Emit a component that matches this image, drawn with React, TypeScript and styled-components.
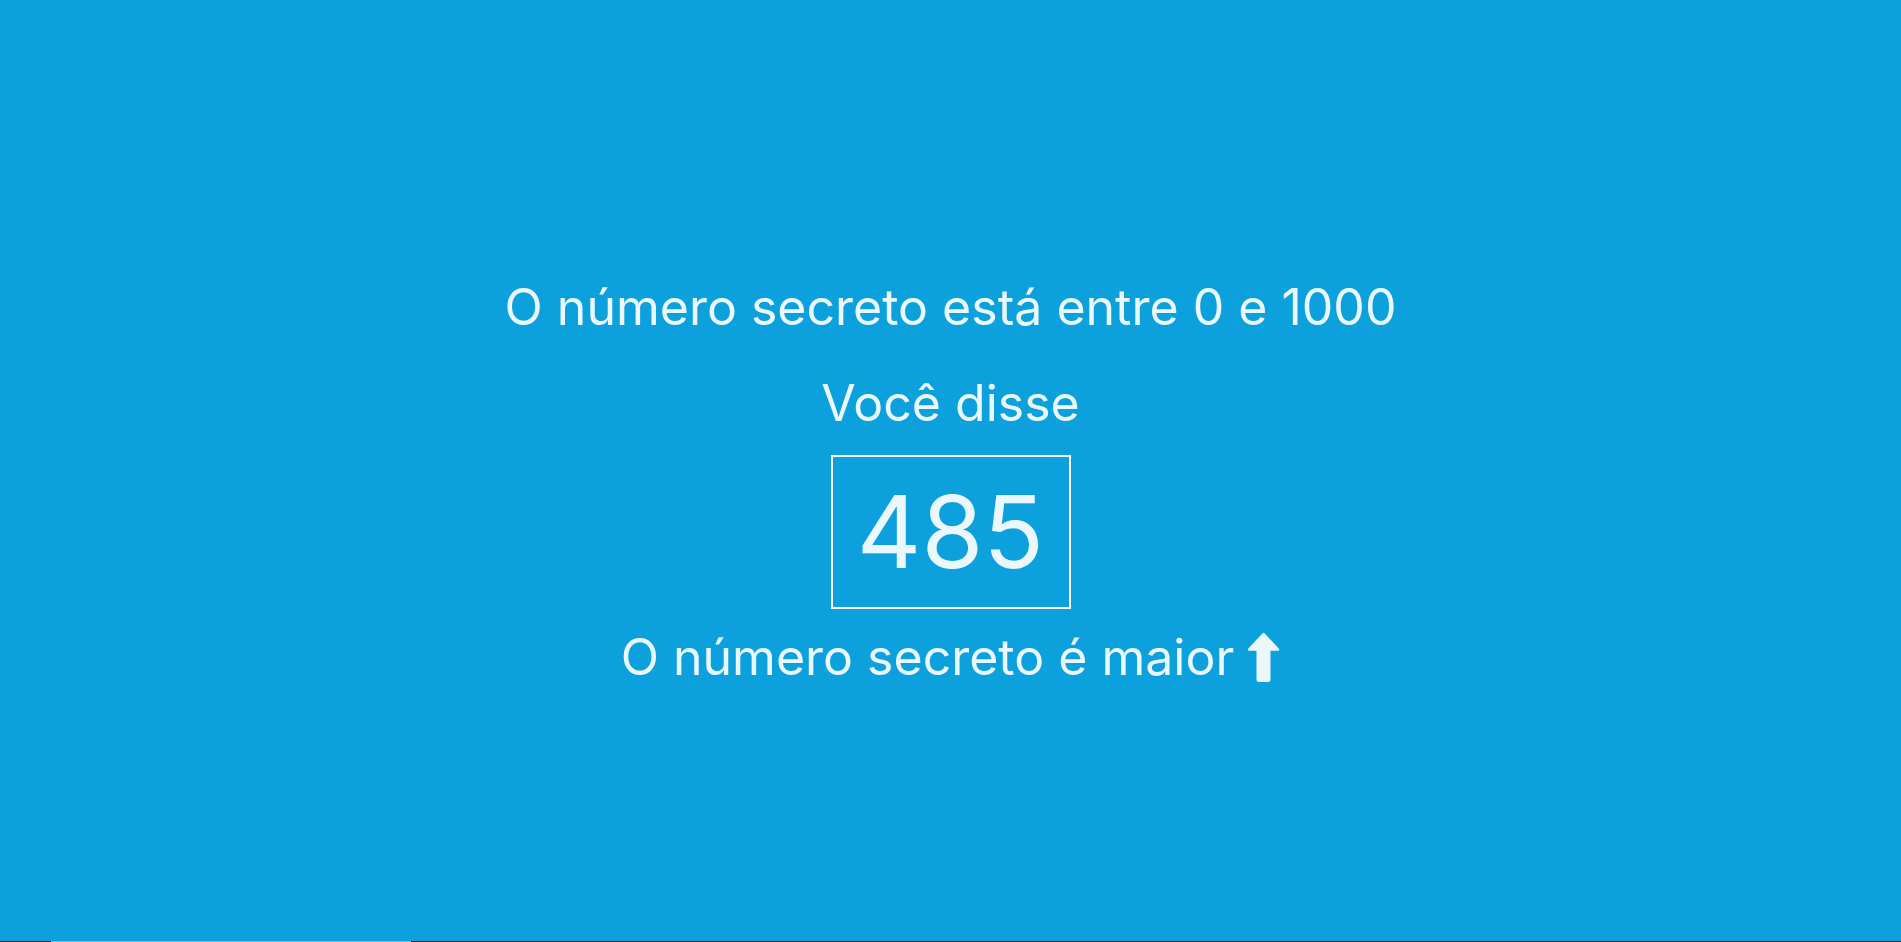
import React from "react";
import styled, { createGlobalStyle } from "styled-components";

const GlobalStyle = createGlobalStyle`
  html, body {
    margin: 0;
    padding: 0;
    background: #0ca1dc;
  }
  body {
    font-family: Inter, "Noto Sans", "Liberation Sans", sans-serif;
    overflow: hidden;
  }
`;

const Page = styled.div`
  height: 942px;
  display: flex;
  flex-direction: column;
  background: #0ca1dc;
  color: #eaf8fe;
`;

const Main = styled.main`
  flex: 1;
  display: flex;
  flex-direction: column;
  align-items: center;
  justify-content: center;
  padding-top: 22px;
`;

const Text = styled.p<{ $mt?: number }>`
  margin: ${(p) => p.$mt ?? 0}px 0 0;
  font-size: 50px;
  line-height: 60px;
  font-weight: 400;
  display: flex;
  align-items: center;
  gap: 13px;
  white-space: nowrap;
`;

const GuessBox = styled.div`
  margin-top: 22px;
  width: 240px;
  height: 154px;
  box-sizing: border-box;
  border: 2px solid #ffffff;
  display: flex;
  align-items: center;
  justify-content: center;
  font-size: 100px;
  line-height: 1;
  font-weight: 400;
`;

const Footer = styled.div`
  height: 1px;
  display: flex;
  background: #0b1a2b;
`;

const FooterSegment = styled.div`
  margin-left: 51px;
  width: 360px;
  background: #a3a9ae;
`;

const ArrowUp = () => (
  <svg width="33" height="50" viewBox="0 0 33 50" aria-hidden="true">
    <path
      d="M16.5 2 L31 17.5 L2 17.5 Z"
      fill="#eaf8fe"
      stroke="#eaf8fe"
      strokeWidth="2.5"
      strokeLinejoin="round"
    />
    <rect x="9.5" y="15" width="14" height="35" rx="2.5" fill="#eaf8fe" />
  </svg>
);

export default function App() {
  return (
    <>
      <GlobalStyle />
      <Page>
        <Main>
          <Text>O número secreto está entre 0 e 1000</Text>
          <Text $mt={36}>Você disse</Text>
          <GuessBox>485</GuessBox>
          <Text $mt={18}>
            <span>O número secreto é maior</span>
            <ArrowUp />
          </Text>
        </Main>
        <Footer>
          <FooterSegment />
        </Footer>
      </Page>
    </>
  );
}
